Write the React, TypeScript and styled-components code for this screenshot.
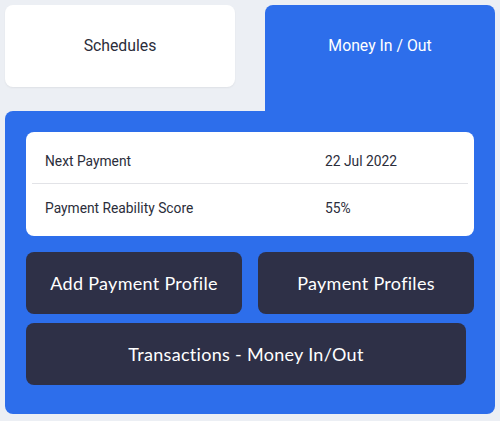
import React from "react";
import styled, { createGlobalStyle } from "styled-components";

const GlobalStyle = createGlobalStyle`
  body {
    margin: 0;
    background: #eceff4;
    font-family: Roboto, "Liberation Sans", sans-serif;
  }
`;

const Page = styled.div`
  padding: 5px;
  width: 490px;
`;

const Tabs = styled.div`
  display: grid;
  grid-template-columns: 230px 230px;
  column-gap: 30px;
  align-items: start;
`;

const Tab = styled.div<{ $active?: boolean }>`
  height: ${(p) => (p.$active ? "106px" : "82px")};
  border-radius: ${(p) => (p.$active ? "8px 8px 0 0" : "8px")};
  background: ${(p) => (p.$active ? "#2d6eeb" : "#ffffff")};
  color: ${(p) => (p.$active ? "#ffffff" : "#2b2d3a")};
  box-shadow: ${(p) => (p.$active ? "none" : "0 1px 2px rgba(0,0,0,0.06)")};
  display: flex;
  justify-content: center;
  padding-top: 31px;
  box-sizing: border-box;
  font-size: 15.8px;
`;

const Panel = styled.div`
  background: #2d6eeb;
  border-radius: 8px 0 8px 8px;
  padding: 21px 21px 29px;
`;

const Card = styled.div`
  background: #ffffff;
  border-radius: 8px;
  padding: 7px 6px 4px;
`;

const Row = styled.div<{ $divider?: boolean }>`
  display: grid;
  grid-template-columns: 280px 1fr;
  align-items: center;
  height: ${(p) => (p.$divider ? "44px" : "48px")};
  padding-left: 13px;
  border-bottom: ${(p) => (p.$divider ? "1px solid #e2e3e7" : "none")};
  font-size: 13.8px;
  color: #2b2d3a;
`;

const Buttons = styled.div`
  display: grid;
  grid-template-columns: 216px 216px;
  column-gap: 16px;
  row-gap: 9px;
  margin-top: 16px;
`;

const Button = styled.button<{ $wide?: boolean }>`
  grid-column: ${(p) => (p.$wide ? "1 / 3" : "auto")};
  width: ${(p) => (p.$wide ? "440px" : "auto")};
  height: 62px;
  border: none;
  border-radius: 8px;
  background: #2e3047;
  color: #ffffff;
  font-family: Lato, "Open Sans", sans-serif;
  font-size: 18px;
  font-weight: 400;
  letter-spacing: 0.3px;
  padding-top: 1px;
  cursor: pointer;
`;

export default function App() {
  return (
    <>
      <GlobalStyle />
      <Page>
        <Tabs>
          <Tab>Schedules</Tab>
          <Tab $active>Money In / Out</Tab>
        </Tabs>
        <Panel>
          <Card>
            <Row $divider>
              <span>Next Payment</span>
              <span>22 Jul 2022</span>
            </Row>
            <Row>
              <span>Payment Reability Score</span>
              <span>55%</span>
            </Row>
          </Card>
          <Buttons>
            <Button>Add Payment Profile</Button>
            <Button>Payment Profiles</Button>
            <Button $wide>Transactions - Money In/Out</Button>
          </Buttons>
        </Panel>
      </Page>
    </>
  );
}
